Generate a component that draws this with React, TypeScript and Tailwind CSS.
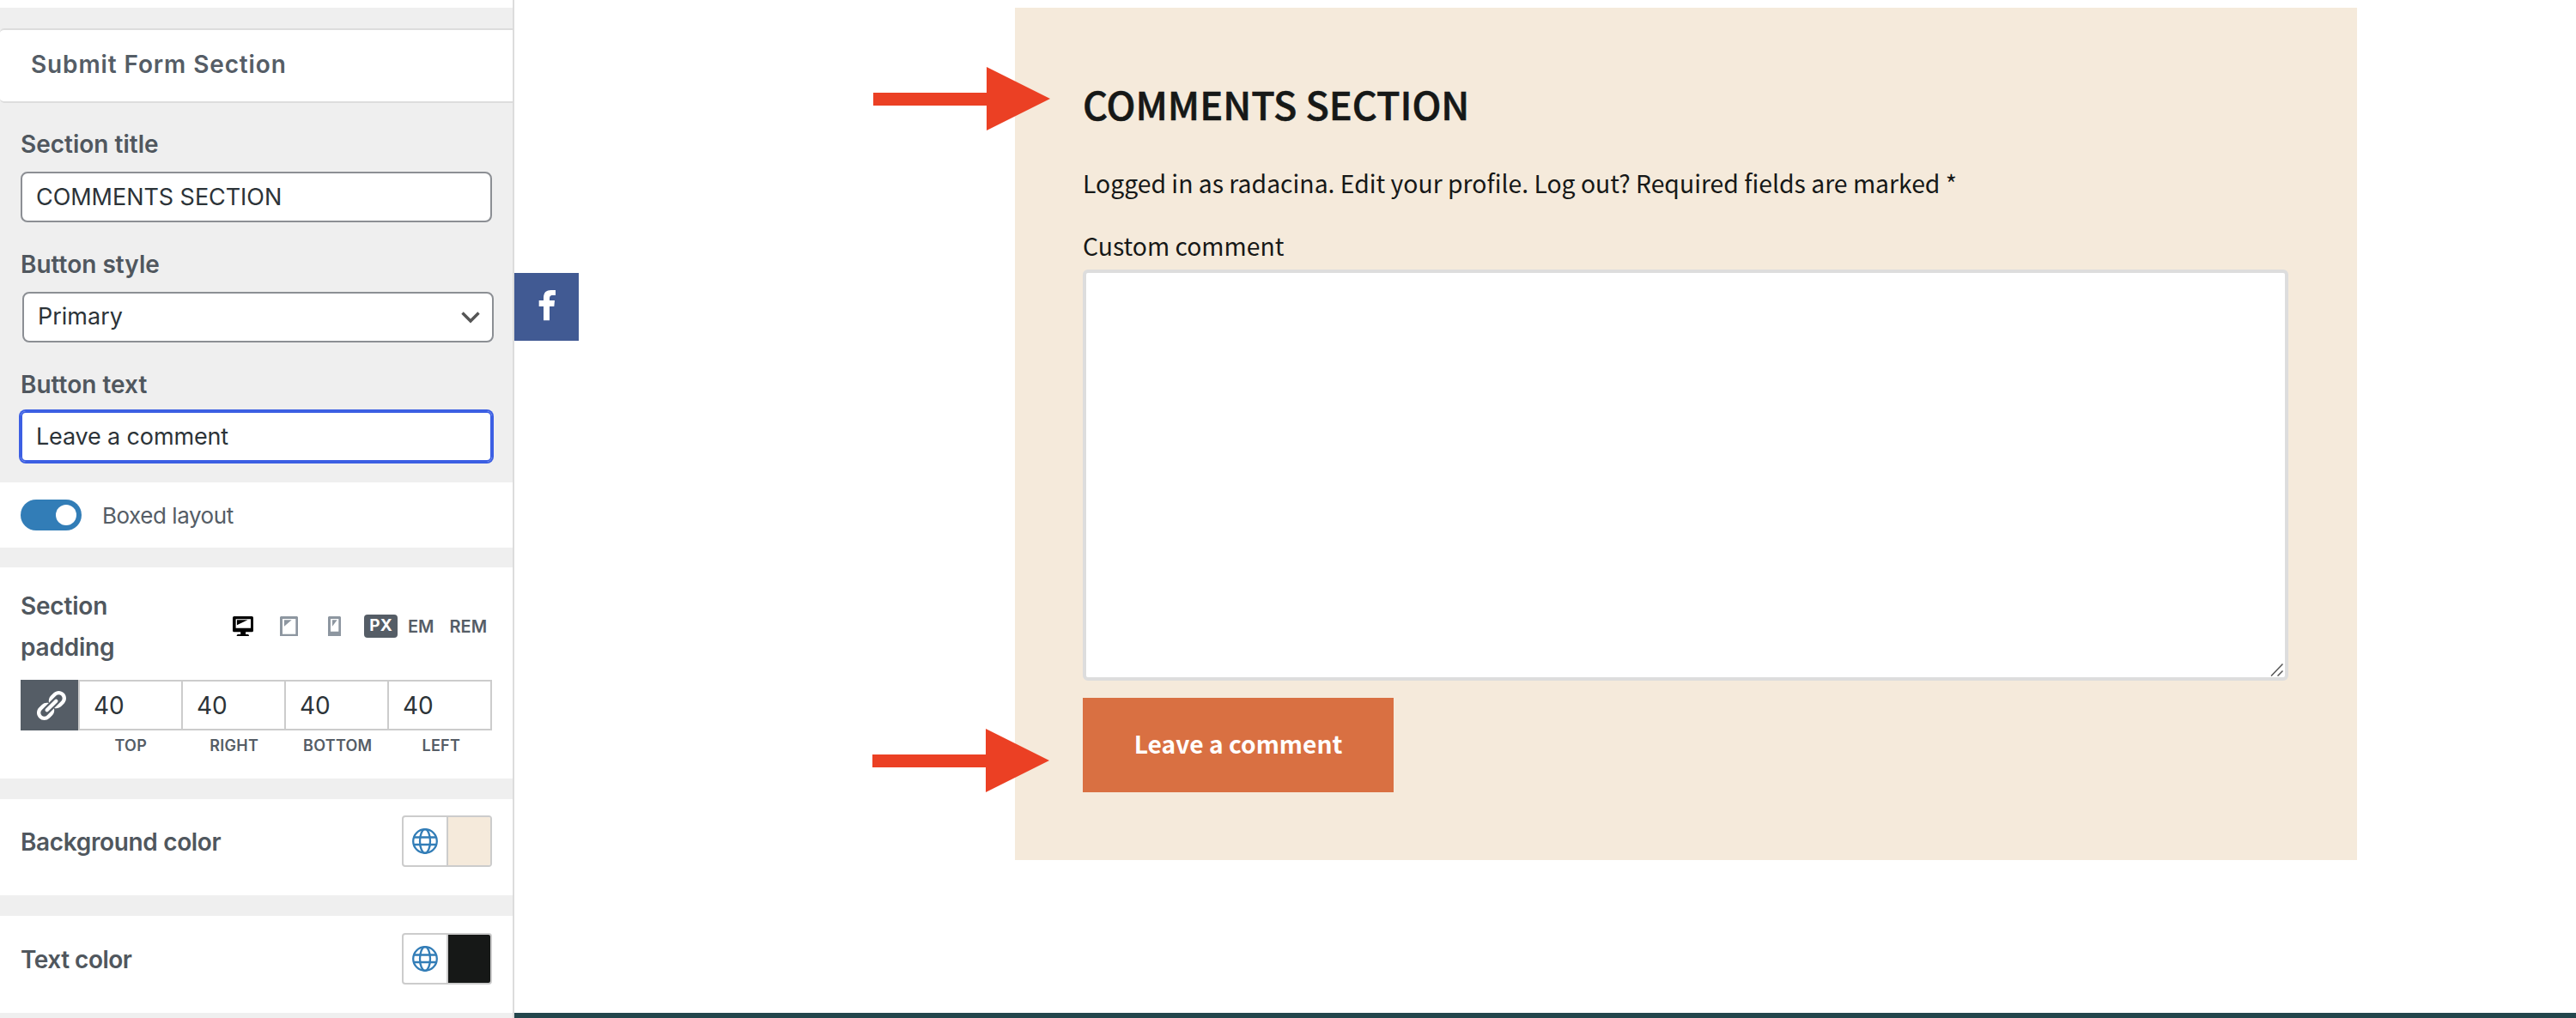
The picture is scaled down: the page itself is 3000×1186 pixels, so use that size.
const labelClass = "flex h-10 items-center text-[28px] font-semibold text-[#50575e]";
const inputClass =
  "flex items-center border-2 border-[#8c8f94] bg-white text-[27px] text-[#2c3338] rounded-lg";

const DesktopIcon = () => (
  <svg className="h-[23px] w-6 text-black" viewBox="62 84 73 69" preserveAspectRatio="none" fill="currentColor">
    <path
      fillRule="evenodd"
      d="M67 84H130Q135 84 135 89V134Q135 139 130 139H108V147H115Q120 147 120 153H76Q76 147 81 147H90V139H67Q62 139 62 134V89Q62 84 67 84ZM73 94V125H126V94Z"
    />
    <path d="M77 97H115L77 115Z" />
  </svg>
);

const TabletIcon = () => (
  <svg className="ml-[31px] h-[23px] w-[21px] text-[#8d96a0]" viewBox="228 84 63 69" preserveAspectRatio="none" fill="currentColor">
    <path fillRule="evenodd" d="M231 84H288L291 87V153H228V87ZM237 93V146H283V93Z" />
    <path d="M243 97H269L243 119Z" />
  </svg>
);

const PhoneIcon = () => (
  <svg className="ml-[35px] h-[23px] w-[15px] text-[#8d96a0]" viewBox="396 84 45 69" preserveAspectRatio="none" fill="currentColor">
    <path fillRule="evenodd" d="M399 84H438L441 87V153H396V87ZM405 93V137H433V93Z" />
    <path d="M411 97H428L411 119Z" />
  </svg>
);

const LinkIcon = () => (
  <svg className="ml-0.5 size-10 text-white" viewBox="0 0 20 20" fill="currentColor">
    <path d="M17.74 2.76c1.68 1.69 1.68 4.41 0 6.1l-1.53 1.52c-1.12 1.12-2.7 1.47-4.14 1.09l2.62-2.61.76-.77.76-.76c.84-.84.84-2.2 0-3.04-.84-.85-2.2-.85-3.04 0l-.77.76-3.38 3.38c-.37-1.44-.02-3.02 1.1-4.14l1.52-1.53c1.69-1.68 4.42-1.68 6.1 0zM8.59 13.43l5.34-5.34c.42-.42.42-1.1 0-1.52-.44-.43-1.13-.39-1.53 0l-5.33 5.34c-.42.42-.42 1.1 0 1.52.44.43 1.13.39 1.52 0zm-.76 2.29l4.14-4.15c.38 1.44.03 3.02-1.09 4.14l-1.52 1.53c-1.69 1.68-4.41 1.68-6.1 0-1.68-1.68-1.68-4.42 0-6.1l1.53-1.52c1.12-1.12 2.7-1.47 4.14-1.1l-4.14 4.15c-.85.84-.85 2.2 0 3.05.84.84 2.2.84 3.04 0z" />
  </svg>
);

const GlobeIcon = () => (
  <svg className="size-[30px] text-[#327db7]" viewBox="0 0 30 30" fill="none" stroke="currentColor" strokeWidth="2.3">
    <circle cx="15" cy="15" r="13.8" />
    <ellipse cx="15" cy="15" rx="6" ry="13.8" />
    <path d="M2 10.5H28M2 19H28" />
  </svg>
);

const Arrow = ({ className }: { className: string }) => (
  <svg className={`absolute h-[74px] w-[206px] text-[#eb4024] ${className}`} viewBox="0 0 206 74" fill="currentColor">
    <path d="M0 30H132V0L206 37L132 74V45H0Z" />
  </svg>
);

const Swatch = ({ color }: { color: string }) => (
  <div className="flex h-[60px] w-[105px] overflow-hidden rounded border-2 border-[#cccccc]">
    <div className="flex w-[52px] items-center justify-center border-r-2 border-[#cccccc]">
      <GlobeIcon />
    </div>
    <div className={`flex-1 ${color}`} />
  </div>
);

const sides = ["TOP", "RIGHT", "BOTTOM", "LEFT"];

const Sidebar = () => (
  <aside className="h-full w-[599px] shrink-0 border-r-2 border-[#dcdcdc] bg-[#efefef] pt-[9px] font-['Inter',sans-serif] shadow-[inset_0_9px_#fff]">
    <div className="h-6" />
    <h3 className="flex h-[87px] items-center rounded-l-[5px] border-y-2 border-[#dddddd] bg-white pb-[3px] pl-9 text-[28px] font-semibold tracking-[0.88px] text-[#555d66]">
      Submit Form Section
    </h3>

    <div className="h-[442px] pt-7 pl-6">
      <div className={labelClass}>Section title</div>
      <div className={`${inputClass} mt-3 h-[59px] w-[549px] pt-0.5 pl-4 tracking-[-0.05px]`}>COMMENTS SECTION</div>

      <div className={`${labelClass} mt-[29px]`}>Button style</div>
      <div className={`${inputClass} mt-3 ml-0.5 h-[59px] w-[549px] justify-between pr-3.5 pl-4`}>
        Primary
        <svg className="h-3.5 w-[22px] text-[#555555]" viewBox="0 0 22 14" fill="none" stroke="currentColor" strokeWidth="3.4">
          <path d="M1.5 1.5L11 11L20.5 1.5" />
        </svg>
      </div>

      <div className={`${labelClass} mt-7 pt-px`}>Button text</div>
      <div className="mt-3 flex h-[59px] w-[549px] items-center rounded-md bg-white pt-px pl-[18px] text-[27px] tracking-[-0.15px] text-[#2c3338] ring-2 ring-[#3c5fe3] outline-2 -outline-offset-2 outline-[#3c5fe3]">
        Leave a comment
      </div>
    </div>

    <div className="flex h-[76px] items-center bg-white pl-6">
      <div className="flex h-9 w-[71px] items-center justify-end rounded-full bg-[#327db7] pr-1.5">
        <div className="size-6 rounded-full bg-white" />
      </div>
      <span className="ml-6 text-[26px] tracking-[-0.45px] text-[#555d66]">Boxed layout</span>
    </div>

    <div className="mt-[23px] h-[246px] bg-white pt-[21px] pl-6">
      <div className="flex h-24 items-center text-xl font-semibold text-[#555d66]">
        <div className="w-[247px] text-[28px] leading-[48px] tracking-[-0.2px] text-[#50575e]">
          Section
          <br />
          padding
        </div>
        <div className="flex items-center pb-px">
          <DesktopIcon />
          <TabletIcon />
          <PhoneIcon />
          <span className="ml-[27px] flex h-[27px] w-[39px] items-center justify-center rounded bg-[#555d66] text-[19px] font-bold text-white">
            PX
          </span>
          <span className="ml-3">EM</span>
          <span className="ml-[18px]">REM</span>
        </div>
      </div>
      <div className="mt-3.5 flex h-[59px] w-[549px]">
        <div className="flex w-[67px] items-center justify-center bg-[#555d66]">
          <LinkIcon />
        </div>
        {sides.map((side) => (
          <div
            key={side}
            className="flex flex-1 items-center border-2 border-r-0 border-[#cccccc] pl-4 text-[28px] text-[#2c3338] last:border-r-2"
          >
            40
          </div>
        ))}
      </div>
      <div className="mt-[5px] ml-[68px] flex w-[482px]">
        {sides.map((side) => (
          <div key={side} className="flex-1 text-center text-lg leading-[26px] font-semibold tracking-[0.25px] text-[#555d66]">
            {side}
          </div>
        ))}
      </div>
    </div>

    <div className="mt-6 flex h-28 items-start justify-between bg-white pt-[19px] pr-6 pl-6">
      <span className="text-[28px] leading-[62px] font-semibold tracking-[-0.35px] text-[#50575e]">Background color</span>
      <Swatch color="bg-[#f5eadb]" />
    </div>
    <div className="mt-6 flex h-[113px] items-start justify-between bg-white pt-5 pr-6 pl-6">
      <span className="text-[28px] leading-[62px] font-semibold tracking-[-0.5px] text-[#50575e]">Text color</span>
      <Swatch color="bg-[#161817]" />
    </div>
  </aside>
);

const CommentForm = () => (
  <section className="ml-[583px] h-[993px] w-[1563px] bg-[#f5eadb] pt-[82px] pl-[79px] text-[#161817]">
    <h2 className="h-[60px] text-[45px] leading-[60px] font-medium [-webkit-text-stroke:0.6px_#161817]">COMMENTS SECTION</h2>
    <p className="mt-[42px] h-10 text-[28.35px] leading-10">
      Logged in as radacina. Edit your profile. Log out? Required fields are marked *
    </p>
    <label className="mt-[33px] block h-10 text-[28.3px] leading-10">Custom comment</label>
    <div className="relative mt-2 h-[479px] w-[1404px] rounded-md border-4 border-[#dddddd] bg-white">
      <svg className="absolute right-0.5 bottom-px size-[15px] text-[#555555]" viewBox="0 0 15 15" stroke="currentColor" strokeWidth="1.5">
        <path d="M1 14.5L14.5 0.5M8.5 14.5L14.5 8.5" />
      </svg>
    </div>
    <button className="mt-5 h-[110px] w-[362px] bg-[#d97042] pb-[5px] text-[28.2px] leading-10 font-bold text-white">
      Leave a comment
    </button>
  </section>
);

export default function App() {
  return (
    <div className="flex h-[1186px] w-[3000px] overflow-hidden bg-white">
      <Sidebar />
      <main className="relative flex flex-1 flex-col justify-between pt-[9px] font-['Noto_Sans_CJK_SC',sans-serif]">
        <CommentForm />
        <footer className="h-1.5 bg-[#23464c]" />
        <a className="absolute top-[318px] left-0 h-[79px] w-[75px] bg-[#415a93]">
          <svg className="size-full" viewBox="297 54 225 237" fill="white">
            <path d="M420 220H399V171H383V150H399V141C399 122 409 114 425 114H441V132H431C422 132 420 137 420 144V150H438L436 171H420Z" />
          </svg>
        </a>
        <Arrow className="top-[78px] left-[418px]" />
        <Arrow className="top-[849px] left-[417px]" />
      </main>
    </div>
  );
}
